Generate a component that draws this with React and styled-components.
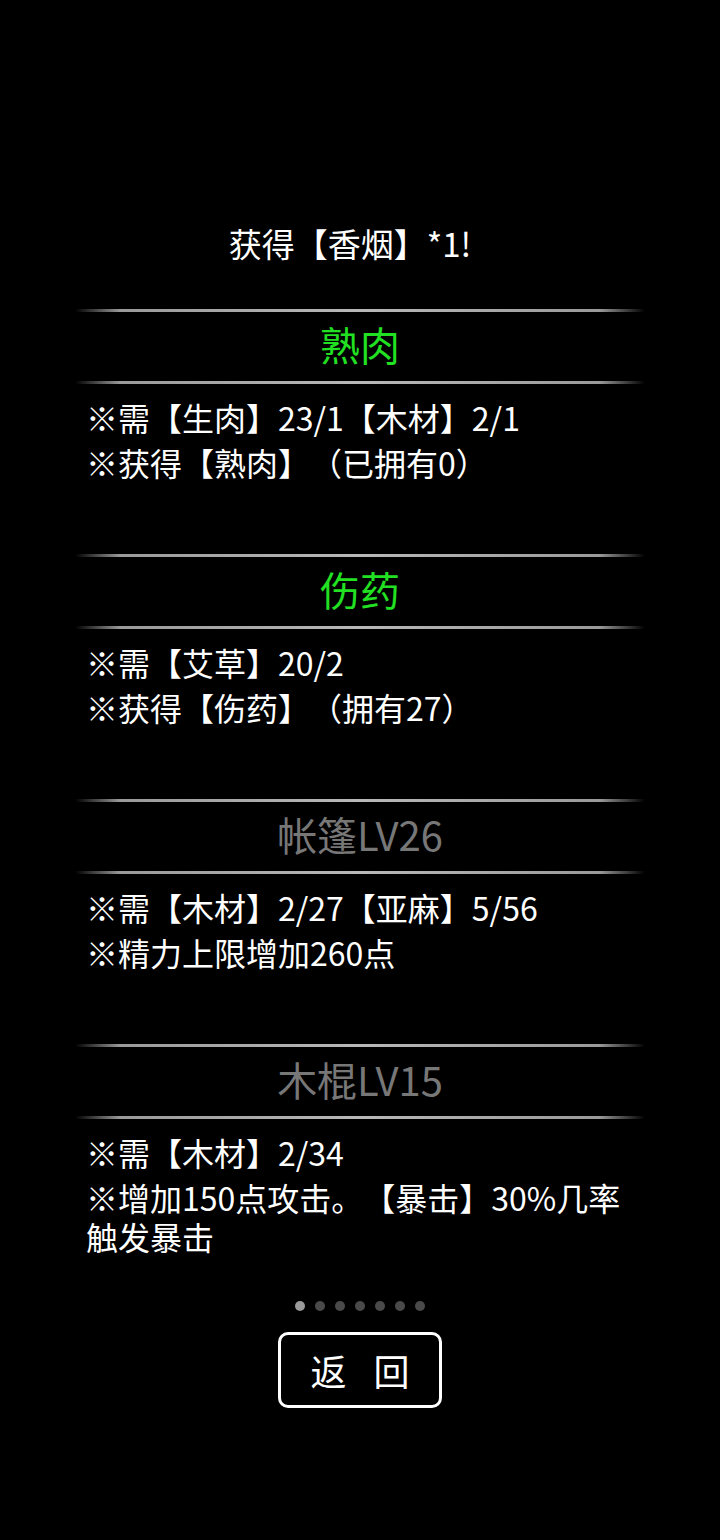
import React from 'react';
import styled, { createGlobalStyle } from 'styled-components';

const GlobalStyle = createGlobalStyle`
  html, body {
    margin: 0;
    padding: 0;
    background: #000;
  }
  body {
    font-family: "Noto Sans CJK SC", "Noto Sans", sans-serif;
    color: #fff;
    text-spacing-trim: space-all;
  }
`;

const recipes = [
  {
    name: '熟肉',
    active: true,
    lines: ['※需【生肉】23/1【木材】2/1', '※获得【熟肉】（已拥有0）'],
  },
  {
    name: '伤药',
    active: true,
    lines: ['※需【艾草】20/2', '※获得【伤药】（拥有27）'],
  },
  {
    name: '帐篷LV26',
    active: false,
    lines: ['※需【木材】2/27【亚麻】5/56', '※精力上限增加260点'],
  },
  {
    name: '木棍LV15',
    active: false,
    lines: ['※需【木材】2/34', '※增加150点攻击。【暴击】30%几率触发暴击'],
  },
];

function App() {
  return (
    <Page>
      <GlobalStyle />
      <Notice>获得【香烟】*1!</Notice>
      <List>
        {recipes.map((r) => (
          <Section key={r.name}>
            <Divider />
            <Header $active={r.active}>{r.name}</Header>
            <Divider />
            <Body>
              {r.lines.map((l) => (
                <Line key={l}>{l}</Line>
              ))}
            </Body>
          </Section>
        ))}
      </List>
      <Dots>
        {[0, 1, 2, 3, 4, 5, 6].map((i) => (
          <Dot key={i} $current={i === 0} />
        ))}
      </Dots>
      <BackButton>
        <span>返</span>
        <span>回</span>
      </BackButton>
    </Page>
  );
}

const Page = styled.div`
  width: 720px;
  min-height: 1540px;
  padding-top: 223px;
  box-sizing: border-box;
  display: flex;
  flex-direction: column;
  align-items: center;
`;

const Notice = styled.div`
  font-size: 33px;
  line-height: 40px;
  height: 40px;
  padding-right: 20px;
  margin-bottom: 46px;
`;

const List = styled.div`
  width: 570px;
  display: flex;
  flex-direction: column;
`;

const Section = styled.div`
  display: flex;
  flex-direction: column;
`;

const Divider = styled.div`
  height: 3px;
  background: linear-gradient(
    90deg,
    rgba(120, 120, 120, 0) 0%,
    #9a9a9a 8%,
    #b8b8b8 50%,
    #9a9a9a 92%,
    rgba(120, 120, 120, 0) 100%
  );
`;

const Header = styled.div`
  height: 69px;
  box-sizing: border-box;
  padding-bottom: 6px;
  display: flex;
  align-items: center;
  justify-content: center;
  font-size: 40px;
  color: ${(p) => (p.$active ? '#22e022' : '#777777')};
`;

const Body = styled.div`
  min-height: 170px;
  box-sizing: border-box;
  padding: 14px 0 0 11px;
  display: flex;
  flex-direction: column;
  gap: 6px;
`;

const Line = styled.div`
  font-size: 32px;
  line-height: 39px;
  padding-right: 10px;
`;

const Dots = styled.div`
  display: flex;
  gap: 10px;
  margin-top: 12px;
  height: 10px;
`;

const Dot = styled.div`
  width: 10px;
  height: 10px;
  border-radius: 50%;
  background: ${(p) => (p.$current ? '#9a9a9a' : '#4a4a4a')};
`;

const BackButton = styled.button`
  margin-top: 21px;
  width: 164px;
  height: 76px;
  box-sizing: border-box;
  border: 3px solid #fff;
  border-radius: 10px;
  background: #000;
  color: #fff;
  font-family: "Noto Sans CJK SC", sans-serif;
  font-size: 36px;
  display: flex;
  align-items: center;
  justify-content: center;
  gap: 27px;
  padding: 0;
`;

export default App;
